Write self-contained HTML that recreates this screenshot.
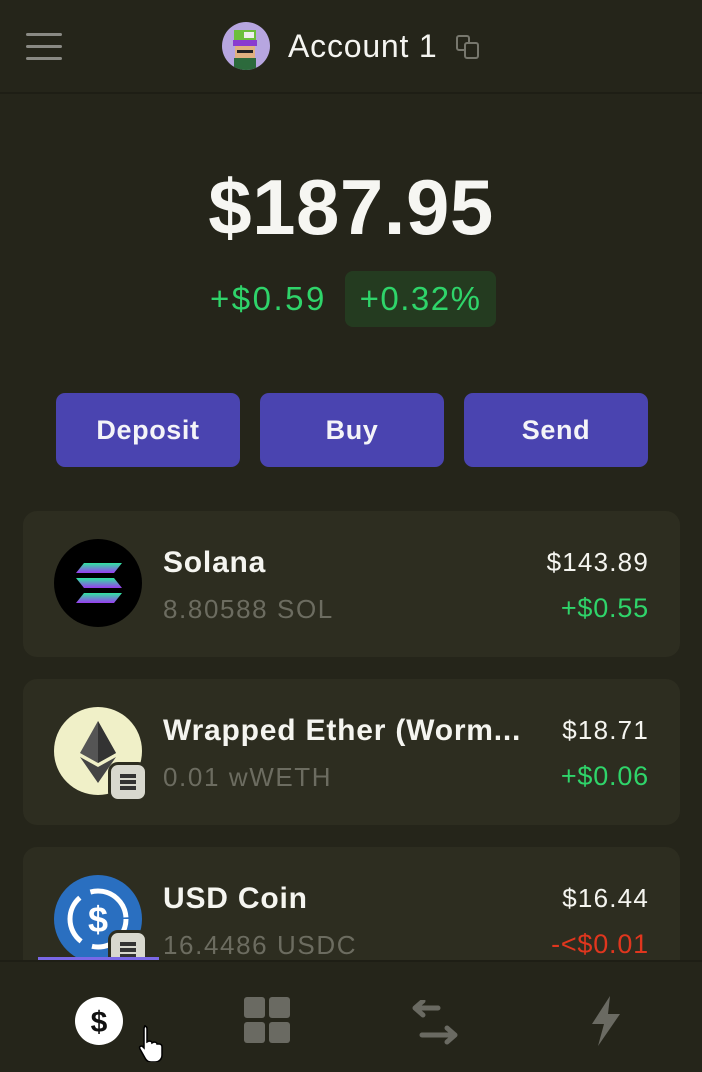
<!DOCTYPE html>
<html><head><meta charset="utf-8">
<style>
*{margin:0;padding:0;box-sizing:border-box}
body{width:702px;height:1072px;background:#25251a;font-family:"Liberation Sans",sans-serif;color:#fff;position:relative;overflow:hidden}
.hdr{position:absolute;left:0;top:0;width:702px;height:94px;border-bottom:2px solid #1e1e15}
.ham{position:absolute;left:26px;top:33px;width:36px}
.ham div{height:3px;background:#8a8a84;border-radius:2px;margin-bottom:9px}
.av{position:absolute;left:222px;top:22px;width:48px;height:48px;border-radius:50%;background:#b7a6e0;overflow:hidden}
.acct{position:absolute;left:288px;top:28px;font-size:32px;letter-spacing:0.8px;color:#f4f4f0}
.bal{position:absolute;left:0;width:702px;top:162px;text-align:center;font-size:78px;font-weight:bold;color:#f6f6f2;letter-spacing:0.5px}
.chg{position:absolute;left:210px;top:280px;font-size:33px;letter-spacing:2.5px;color:#2fd46a}
.pct{position:absolute;left:345px;top:271px;width:151px;height:56px;background:#243b20;border-radius:8px;color:#2fd46a;font-size:33px;letter-spacing:1.5px;text-align:center;line-height:56px}
.btn{position:absolute;top:393px;width:184px;height:74px;background:#4a44b0;border-radius:9px;text-align:center;line-height:74px;font-size:27px;letter-spacing:0.6px;font-weight:bold;color:#f4f4f8}
.card{position:absolute;left:23px;width:657px;height:146px;background:#2d2d20;border-radius:14px}
.ic{position:absolute;left:31px;top:28px;width:88px;height:88px;border-radius:50%}
.nm{position:absolute;left:140px;top:35px;font-size:30px;letter-spacing:0.8px;font-weight:bold;color:#f5f5f0;white-space:nowrap}
.sub{position:absolute;left:140px;top:83px;font-size:26px;letter-spacing:1.6px;color:#6c6c60}
.val{position:absolute;right:31px;top:36px;font-size:26px;letter-spacing:1.2px;color:#f5f5f0}
.dl{position:absolute;right:31px;top:82px;font-size:27px;letter-spacing:0.8px;color:#2fd46a}
.badge{position:absolute;left:85px;top:83px;width:40px;height:40px;border-radius:10px;background:#d8d8ce;border:3px solid #2d2d20}
.nav{position:absolute;left:0;top:960px;width:702px;height:112px;background:#25251a;border-top:2px solid #1e1e15}
</style></head><body>
<div class="hdr">
<div class="ham"><div></div><div></div><div></div></div>
<div class="av"><svg width="48" height="48"><rect x="12" y="8" width="22" height="10" fill="#6cbf3c"/><rect x="22" y="10" width="10" height="6" fill="#eee"/><rect x="11" y="18" width="24" height="6" fill="#8a3ad0"/><rect x="13" y="24" width="20" height="12" fill="#e0b080"/><rect x="15" y="28" width="16" height="3" fill="#222"/><rect x="12" y="36" width="22" height="12" fill="#2c6a3c"/></svg></div>
<div class="acct">Account 1</div>
<svg style="position:absolute;left:455px;top:34px" width="26" height="26"><rect x="2" y="2" width="12" height="14" rx="2" fill="none" stroke="#77776d" stroke-width="2"/><rect x="10" y="9" width="13" height="15" rx="2" fill="#25251a" stroke="#77776d" stroke-width="2"/></svg>
</div>
<div class="bal">$187.95</div>
<div class="chg">+$0.59</div>
<div class="pct">+0.32%</div>
<div class="btn" style="left:56px">Deposit</div>
<div class="btn" style="left:260px">Buy</div>
<div class="btn" style="left:464px">Send</div>

<div class="card" style="top:511px">
<div class="ic" style="background:#000"><svg width="88" height="88"><defs><linearGradient id="g" x1="0" y1="0" x2="0" y2="1"><stop offset="0" stop-color="#2fe6a0"/><stop offset="1" stop-color="#9a3cf0"/></linearGradient></defs><g fill="url(#g)"><polygon points="30,24 68,24 60,34 22,34"/><polygon points="22,39 60,39 68,49 30,49"/><polygon points="30,54 68,54 60,64 22,64"/></g></svg></div>
<div class="nm">Solana</div><div class="sub">8.80588 SOL</div>
<div class="val">$143.89</div><div class="dl">+$0.55</div>
</div>
<div class="card" style="top:679px">
<div class="ic" style="background:#f0f0c8"><svg width="88" height="88"><polygon points="44,14 26,46 44,56 62,46" fill="#555"/><polygon points="44,14 44,56 62,46" fill="#333"/><polygon points="26,50 44,60 62,50 44,76" fill="#444"/></svg></div>
<div class="badge"><svg width="34" height="34"><g fill="#333"><rect x="9" y="9" width="16" height="4"/><rect x="9" y="15" width="16" height="4"/><rect x="9" y="21" width="16" height="4"/></g></svg></div>
<div class="nm">Wrapped Ether (Worm...</div><div class="sub">0.01 wWETH</div>
<div class="val">$18.71</div><div class="dl">+$0.06</div>
</div>
<div class="card" style="top:847px">
<div class="ic" style="background:#2a6fc0"><svg width="88" height="88"><circle cx="44" cy="44" r="28" fill="none" stroke="#fff" stroke-width="5" stroke-dasharray="50 12"/><text x="44" y="57" text-anchor="middle" font-size="36" font-weight="bold" fill="#fff" font-family="Liberation Sans">$</text></svg></div>
<div class="badge"><svg width="34" height="34"><g fill="#333"><rect x="9" y="9" width="16" height="4"/><rect x="9" y="15" width="16" height="4"/><rect x="9" y="21" width="16" height="4"/></g></svg></div>
<div class="nm">USD Coin</div><div class="sub">16.4486 USDC</div>
<div class="val">$16.44</div><div class="dl" style="color:#e0361e">-&lt;$0.01</div>
</div>

<div style="position:absolute;left:38px;top:957px;width:121px;height:4px;background:#7a68e6"></div>
<div class="nav">
<svg style="position:absolute;left:74px;top:34px" width="50" height="50"><ellipse cx="25" cy="25" rx="24" ry="24" fill="#fff"/><text x="25" y="36" text-anchor="middle" font-size="30" font-weight="bold" fill="#111" font-family="Liberation Sans">$</text></svg>
<svg style="position:absolute;left:244px;top:35px" width="48" height="48"><g fill="#6a6a62"><rect x="0" y="0" width="21" height="21" rx="3"/><rect x="25" y="0" width="21" height="21" rx="3"/><rect x="0" y="25" width="21" height="21" rx="3"/><rect x="25" y="25" width="21" height="21" rx="3"/></g></svg>
<svg style="position:absolute;left:410px;top:38px" width="54" height="46" fill="none" stroke="#6a6a62" stroke-width="5" stroke-linecap="round" stroke-linejoin="round"><path d="M28 8H5M13 1L5 8l8 7"/><path d="M12 35h33M37 28l8 7-8 7"/></svg>
<svg style="position:absolute;left:588px;top:34px" width="36" height="52"><polygon points="22,0 4,28 16,28 10,50 32,18 20,18" fill="#6a6a62"/></svg>
<svg style="position:absolute;left:136px;top:62px" width="32" height="38"><path d="M8 2c2 0 3 1 3 3v13l2-1c2 0 3 1 3 2l2-1c2 0 3 1 3 2l2 0c2 0 3 1 3 3v8c0 4-3 7-7 7h-4c-3 0-5-2-6-4l-5-9c-1-2 0-3 2-3l2 2V5c0-2 1-3 2-3z" fill="#fff" stroke="#000" stroke-width="1.5"/></svg>
</div>
</body></html>
